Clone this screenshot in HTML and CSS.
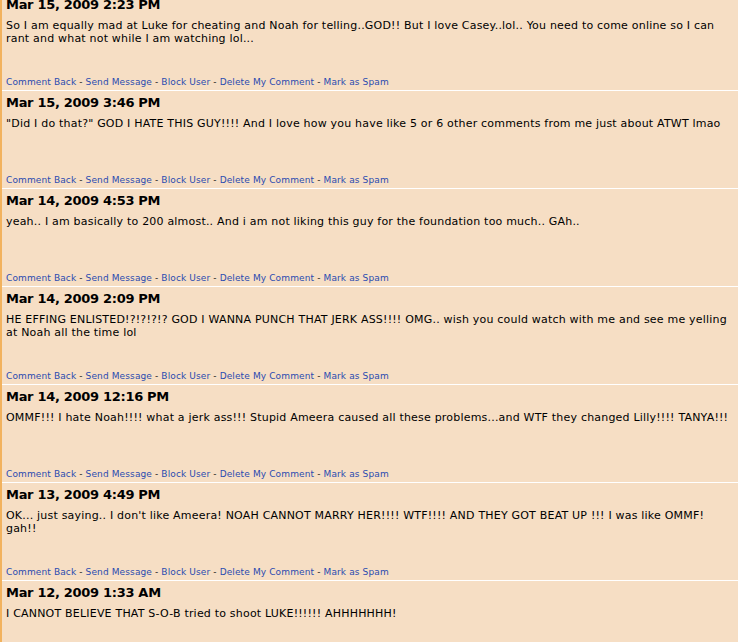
FILE: index.html
```html
<!DOCTYPE html>
<html lang="en">
<head>
    <meta charset="UTF-8">
    <title>Comments</title>
    <link rel="stylesheet" href="styles.css">
</head>
<body>
    <div class="comments">
        <div class="comment">
            <h3 class="date">Mar 15, 2009 2:23 PM</h3>
            <p class="text">So I am equally mad at Luke for cheating and Noah for telling..GOD!! But I love Casey..lol.. You need to come online so I can rant and what not while I am watching lol...</p>
            <div class="actions"><a href="#">Comment Back</a> - <a href="#">Send Message</a> - <a href="#">Block User</a> - <a href="#">Delete My Comment</a> - <a href="#">Mark as Spam</a></div>
        </div>
        <div class="comment">
            <h3 class="date">Mar 15, 2009 3:46 PM</h3>
            <p class="text">"Did I do that?" GOD I HATE THIS GUY!!!! And I love how you have like 5 or 6 other comments from me just about ATWT lmao</p>
            <div class="actions"><a href="#">Comment Back</a> - <a href="#">Send Message</a> - <a href="#">Block User</a> - <a href="#">Delete My Comment</a> - <a href="#">Mark as Spam</a></div>
        </div>
        <div class="comment">
            <h3 class="date">Mar 14, 2009 4:53 PM</h3>
            <p class="text">yeah.. I am basically to 200 almost.. And i am not liking this guy for the foundation too much.. GAh..</p>
            <div class="actions"><a href="#">Comment Back</a> - <a href="#">Send Message</a> - <a href="#">Block User</a> - <a href="#">Delete My Comment</a> - <a href="#">Mark as Spam</a></div>
        </div>
        <div class="comment">
            <h3 class="date">Mar 14, 2009 2:09 PM</h3>
            <p class="text">HE EFFING ENLISTED!?!?!?!? GOD I WANNA PUNCH THAT JERK ASS!!!! OMG.. wish you could watch with me and see me yelling at Noah all the time lol</p>
            <div class="actions"><a href="#">Comment Back</a> - <a href="#">Send Message</a> - <a href="#">Block User</a> - <a href="#">Delete My Comment</a> - <a href="#">Mark as Spam</a></div>
        </div>
        <div class="comment">
            <h3 class="date">Mar 14, 2009 12:16 PM</h3>
            <p class="text">OMMF!!! I hate Noah!!!! what a jerk ass!!! Stupid Ameera caused all these problems...and WTF they changed Lilly!!!! TANYA!!!</p>
            <div class="actions"><a href="#">Comment Back</a> - <a href="#">Send Message</a> - <a href="#">Block User</a> - <a href="#">Delete My Comment</a> - <a href="#">Mark as Spam</a></div>
        </div>
        <div class="comment">
            <h3 class="date">Mar 13, 2009 4:49 PM</h3>
            <p class="text">OK... just saying.. I don't like Ameera! NOAH CANNOT MARRY HER!!!! WTF!!!! AND THEY GOT BEAT UP !!! I was like OMMF! gah!!</p>
            <div class="actions"><a href="#">Comment Back</a> - <a href="#">Send Message</a> - <a href="#">Block User</a> - <a href="#">Delete My Comment</a> - <a href="#">Mark as Spam</a></div>
        </div>
        <div class="comment">
            <h3 class="date">Mar 12, 2009 1:33 AM</h3>
            <p class="text">I CANNOT BELIEVE THAT S-O-B tried to shoot LUKE!!!!!! AHHHHHHH!</p>
            <div class="actions"><a href="#">Comment Back</a> - <a href="#">Send Message</a> - <a href="#">Block User</a> - <a href="#">Delete My Comment</a> - <a href="#">Mark as Spam</a></div>
        </div>
    </div>
</body>
</html>
```

FILE: styles.css
```css
body {
    margin: 0;
    padding: 0;
    background-color: #ffffff;
    font-family: 'DejaVu Sans', Verdana, sans-serif;
    color: #000;
    overflow: hidden;
}

.comments {
    width: 736px;
    margin-top: -7px;
    border-left: 2px solid #f2b25e;
    background-color: #f6dec4;
}

.comment {
    padding: 3px 4px 2px 4px;
    box-sizing: border-box;
    height: 98px;
    border-bottom: 1px solid #ffffff;
    display: flex;
    flex-direction: column;
}

.date {
    margin: 0;
    font-size: 13px;
    line-height: 17px;
    font-weight: bold;
    letter-spacing: -0.3px;
}

.text {
    margin: 6px 0 0 0;
    font-size: 11px;
    line-height: 13px;
    letter-spacing: 0.2px;
}

.actions {
    margin-top: auto;
    font-size: 9px;
    line-height: 12px;
    letter-spacing: 0.12px;
    color: #222;
}

.actions a {
    color: #2a4bb0;
    text-decoration: none;
}
```
